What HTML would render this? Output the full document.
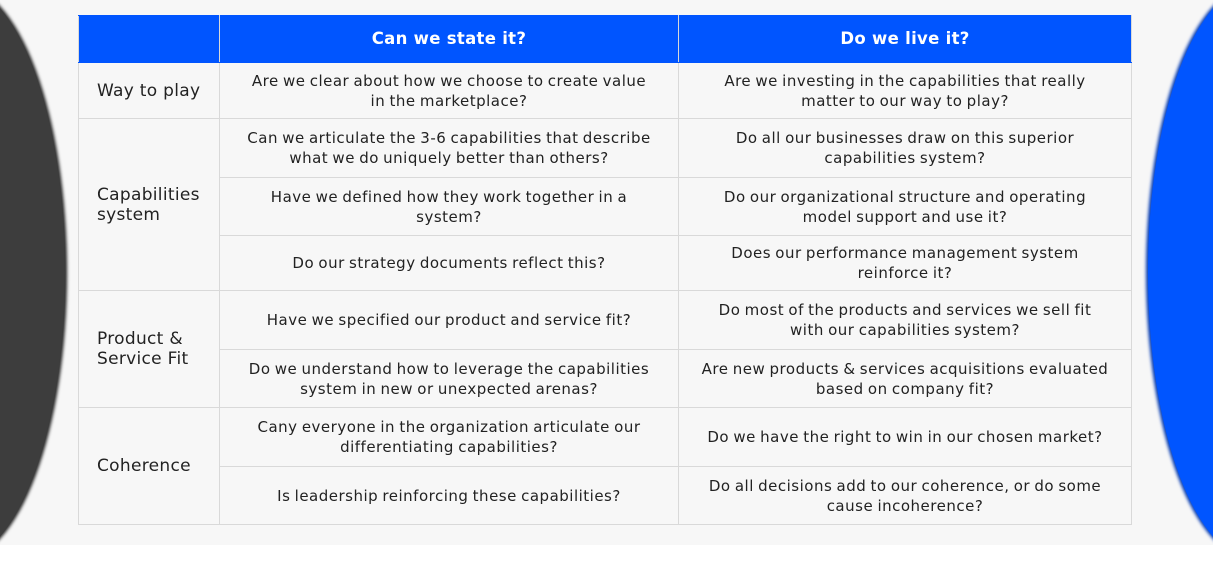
<!DOCTYPE html>
<html><head><meta charset="utf-8"><style>
html,body{margin:0;padding:0;width:1215px;height:563px;overflow:hidden;background:#fff;position:relative;font-family:"DejaVu Sans","Liberation Sans",sans-serif;}
.bg{position:absolute;left:0;top:0;width:1213px;height:545px;background:#f7f7f7;overflow:hidden}
.l{position:absolute;left:-150px;top:-15px;width:215px;height:575px;border-radius:50%;background:#3d3d3d;box-shadow:2px 0 3px #222}
.r{position:absolute;left:1148px;top:-15px;width:215px;height:575px;border-radius:50%;background:#0055ff;box-shadow:-2px 0 3px #0038b0}
table{position:absolute;left:78px;top:15px;border-collapse:collapse;width:1053px;table-layout:fixed}
td,th{border:1px solid #d9d9d9;text-align:center;vertical-align:middle;font-size:15px;line-height:20px;color:#222;padding:0 12px;letter-spacing:0.5px;word-spacing:-1px}
th{background:#0055ff;color:#fff;height:46px;font-size:16.5px;font-weight:bold;border-color:#0055ff #d9d9d9;letter-spacing:0.3px;word-spacing:0}
td.h{text-align:left;padding-left:18px;padding-right:4px;font-size:17px;letter-spacing:0.3px;word-spacing:0}
</style></head><body>
<div class="bg"><div class="l"></div><div class="r"></div>
<table>
<colgroup><col style="width:141px"><col style="width:459px"><col style="width:453px"></colgroup>
<tr><th></th><th>Can we state it?</th><th>Do we live it?</th></tr>
<tr style="height:56px"><td class="h">Way to play</td><td>Are we clear about how we choose to create value<br>in the marketplace?</td><td>Are we investing in the capabilities that really<br>matter to our way to play?</td></tr>
<tr style="height:59px"><td class="h" rowspan="3">Capabilities system</td><td>Can we articulate the 3-6 capabilities that describe<br>what we do uniquely better than others?</td><td>Do all our businesses draw on this superior<br>capabilities system?</td></tr>
<tr style="height:58px"><td>Have we defined how they work together in a<br>system?</td><td>Do our organizational structure and operating<br>model support and use it?</td></tr>
<tr style="height:55px"><td>Do our strategy documents reflect this?</td><td>Does our performance management system<br>reinforce it?</td></tr>
<tr style="height:59px"><td class="h" rowspan="2">Product &amp; Service Fit</td><td>Have we specified our product and service fit?</td><td>Do most of the products and services we sell fit<br>with our capabilities system?</td></tr>
<tr style="height:58px"><td>Do we understand how to leverage the capabilities<br>system in new or unexpected arenas?</td><td>Are new products &amp; services acquisitions evaluated<br>based on company fit?</td></tr>
<tr style="height:59px"><td class="h" rowspan="2">Coherence</td><td>Cany everyone in the organization articulate our<br>differentiating capabilities?</td><td>Do we have the right to win in our chosen market?</td></tr>
<tr style="height:58px"><td>Is leadership reinforcing these capabilities?</td><td>Do all decisions add to our coherence, or do some<br>cause incoherence?</td></tr>
</table></div>
</body></html>
